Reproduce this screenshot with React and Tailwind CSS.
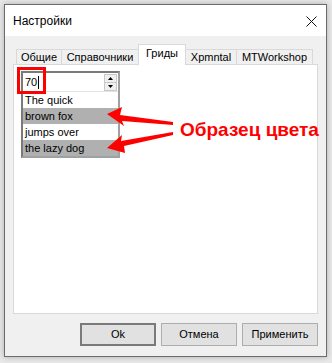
import React from "react";

const font = { fontFamily: '"Liberation Sans", Arial, sans-serif' };

function Tab({ label, w, selected, first }) {
  return (
    <div
      className={
        (first ? "" : "-ml-px ") +
        (selected
          ? "relative z-10 h-[21px] -mb-px bg-white pb-[3px] "
          : "h-[15px] bg-[#f0f0f0] ") +
        "flex items-center justify-center border border-b-0 border-[#d9d9d9] text-[11px] text-black"
      }
      style={{ width: w }}
    >
      {label}
    </div>
  );
}

function Btn({ children, def }) {
  return (
    <div
      className={
        "flex h-[23px] w-[76px] items-center justify-center bg-[#e1e1e1] text-[11px] text-black " +
        (def ? "border-2 border-[#7a7a7a]" : "border border-[#adadad]")
      }
    >
      {children}
    </div>
  );
}

export default function App() {
  const rows = [
    { t: "The quick", g: false },
    { t: "brown fox", g: true },
    { t: "jumps over", g: false },
    { t: "the lazy dog", g: true },
  ];
  return (
    <div
      className="relative h-[363px] w-[332px] overflow-hidden bg-[#e8e8e8] pl-[4px] pt-[4px]"
      style={font}
    >
      <div className="flex h-[353px] w-[323px] flex-col border border-[#6b6b6b] shadow-[0_0_6px_rgba(0,0,0,0.25)]">
        {/* title bar */}
        <div className="flex h-[31px] items-center justify-between bg-white pl-[8px] pr-[9px]">
          <span className="text-[12px] text-black">Настройки</span>
          <svg width="11" height="11" viewBox="0 0 11 11" className="mt-[2px]">
            <path d="M0.5 0.5 L10.5 10.5 M10.5 0.5 L0.5 10.5" stroke="#111" strokeWidth="1" />
          </svg>
        </div>
        {/* body */}
        <div className="flex flex-1 flex-col bg-[#f0f0f0] pl-[8px] pt-[9px]">
          <div className="ml-[3px] flex h-[19px] items-end">
            <Tab label="Общие" w={46} first />
            <Tab label="Справочники" w={78} />
            <Tab label="Гриды" w={48} selected />
            <Tab label="Xpmntal" w={52} />
            <Tab label="MTWorkshop" w={77} />
          </div>
          <div className="h-[250px] w-[305px] border border-[#d9d9d9] bg-white">
            <div className="ml-[7px] mt-[6px] flex h-[87px] w-[99px] flex-col border-2 border-b-[#a0a0a0] border-l-[#7a7a7a] border-r-[#a0a0a0] border-t-[#7a7a7a]">
              <div className="flex h-[19px] items-center justify-between border-b border-[#e3e3e3] bg-white">
                <div className="flex items-center pl-[2px] text-[11px] text-black">
                  <span>70</span>
                  <span className="ml-[1px] h-[13px] w-[1px] bg-black" />
                </div>
                <div className="mr-[1px] flex h-[17px] w-[13px] flex-col border border-[#c8c8c8] bg-[#f0f0f0]">
                  <div className="flex flex-1 items-center justify-center border-b border-[#c8c8c8]">
                    <svg width="5" height="3" viewBox="0 0 5 3">
                      <path d="M2.5 0 L5 3 L0 3 Z" fill="#000" />
                    </svg>
                  </div>
                  <div className="flex flex-1 items-center justify-center">
                    <svg width="5" height="3" viewBox="0 0 5 3">
                      <path d="M0 0 L5 0 L2.5 3 Z" fill="#000" />
                    </svg>
                  </div>
                </div>
              </div>
              {rows.map((r) => (
                <div
                  key={r.t}
                  className={
                    "flex h-[16px] items-center pl-[2px] text-[11px] text-black " +
                    (r.g ? "bg-[#b0b0b0]" : "bg-white")
                  }
                >
                  {r.t}
                </div>
              ))}
            </div>
          </div>
          <div className="mt-[9px] flex w-[305px] justify-end gap-[5px]">
            <Btn def>Ok</Btn>
            <Btn>Отмена</Btn>
            <Btn>Применить</Btn>
          </div>
        </div>
      </div>

      {/* annotations */}
      <div className="absolute left-[17px] top-[67px] h-[27px] w-[29px] border-[3px] border-[#ff0000]" />
      <svg className="pointer-events-none absolute left-0 top-0" width="332" height="363">
        <polygon
          points="107,114 122,107 120,115 173,122 173,125 122,121 124,126"
          fill="#ff0000"
        />
        <polygon
          points="107,148 122,135 121,141 173,132 173,135 124,146 125,153"
          fill="#ff0000"
        />
      </svg>
      <div className="absolute left-[180px] top-[120px] text-[19px] font-bold leading-[19px] text-[#ff0000]">
        Образец цвета
      </div>
    </div>
  );
}
